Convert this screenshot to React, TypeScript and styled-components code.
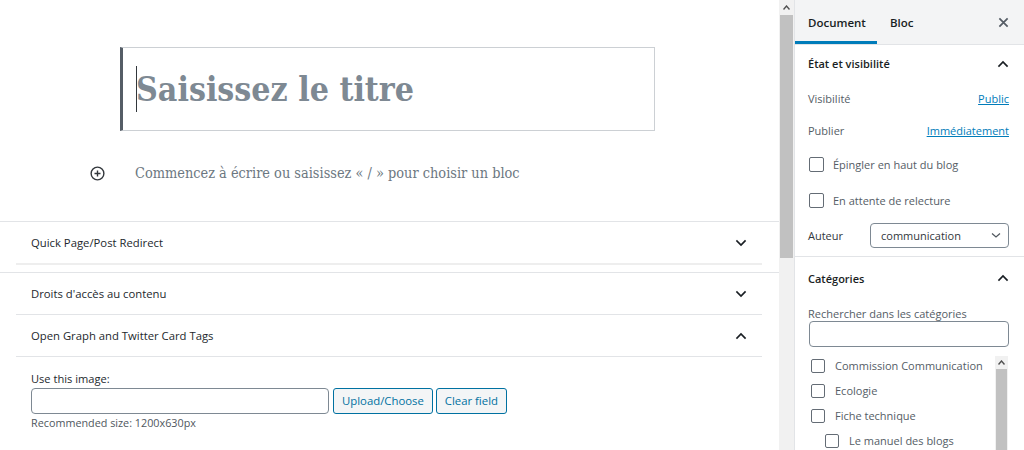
import React from "react";
import styled, { createGlobalStyle } from "styled-components";

const GlobalStyle = createGlobalStyle`
  html, body { margin: 0; padding: 0; background: #fff; }
  body { font-family: "Open Sans", "Noto Sans", sans-serif; color: #191e23; }
  * { box-sizing: border-box; }
`;

const Layout = styled.div`
  display: grid;
  grid-template-columns: 779px 15px 230px;
  height: 450px;
  overflow: hidden;
  background: #fff;
`;

/* ---------- Editor ---------- */
const Editor = styled.main`
  display: flex;
  flex-direction: column;
  min-width: 0;
`;

const TitleWrap = styled.div`
  padding: 47px 0 0 120px;
`;

const TitleBox = styled.div`
  width: 535px;
  height: 84px;
  border: 1px solid #ccd0d4;
  border-left: 3px solid #555d66;
  display: flex;
  align-items: center;
  padding-left: 13px;
`;

const Caret = styled.span`
  width: 1px;
  height: 46px;
  background: #32373c;
  margin-right: -1px;
  flex: none;
`;

const TitleText = styled.span`
  font-family: "DejaVu Serif Condensed", "DejaVu Serif", serif;
  font-stretch: semi-condensed;
  font-weight: 700;
  font-size: 33.6px;
  color: #7e8993;
  white-space: nowrap;
`;

const ParagraphRow = styled.div`
  margin-top: 29px;
  height: 26px;
  display: flex;
  align-items: center;
  padding-left: 90px;
  gap: 30px;
`;

const Placeholder = styled.span`
  font-family: "DejaVu Serif Condensed", "DejaVu Serif", serif;
  font-stretch: semi-condensed;
  font-size: 14.4px;
  color: #6c7781;
  white-space: nowrap;
`;

const InserterIcon = () => (
  <svg width="15" height="15" viewBox="0 0 16 16" fill="none">
    <circle cx="8" cy="8" r="6.8" stroke="#32373c" strokeWidth="1.5" />
    <path d="M8 4.8v6.4M4.8 8h6.4" stroke="#32373c" strokeWidth="1.5" />
  </svg>
);

const MetaArea = styled.section`
  margin-top: 35px;
  display: flex;
  flex-direction: column;
`;

const Region = styled.div<{ $pb?: number }>`
  border-top: 1px solid #e2e4e7;
  padding: 0 17px ${(p) => p.$pb ?? 0}px 16px;
`;

const BoxHeader = styled.div<{ $thick?: boolean }>`
  height: ${(p) => (p.$thick ? 43 : 42)}px;
  display: flex;
  align-items: center;
  justify-content: space-between;
  padding: 0 15px 0 15px;
  border-bottom: ${(p) => (p.$thick ? "2px solid #eeeeee" : "1px solid #e2e4e7")};
  font-size: 11.3px;
  color: #23282d;
`;

const BoxBody = styled.div`
  padding: 14px 15px 0;
  font-size: 11.1px;
  color: #23282d;
`;

const FieldLabel = styled.div`
  line-height: 16px;
`;

const FieldRow = styled.div`
  margin-top: 1px;
  display: flex;
  gap: 3px;
  align-items: center;
`;

const TextInput = styled.div<{ $w: number; $h: number; $mr?: number }>`
  width: ${(p) => p.$w}px;
  height: ${(p) => p.$h}px;
  margin-right: ${(p) => p.$mr ?? 0}px;
  border: 1px solid #7e8993;
  border-radius: 4px;
  background: #fff;
  flex: none;
`;

const SecondaryButton = styled.button`
  height: 26px;
  padding: 0 8px;
  border: 1px solid #0071a1;
  border-radius: 3px;
  background: #f3f5f6;
  color: #0071a1;
  font-family: "Open Sans", sans-serif;
  font-size: 11.35px;
  line-height: 24px;
`;

const Hint = styled.div`
  margin-top: 1px;
  line-height: 16px;
  color: #50575e;
  font-size: 10.8px;
`;

const Chevron = ({ up }: { up?: boolean }) => (
  <svg width="12" height="12" viewBox="0 0 24 24" fill="none">
    <path
      d={up ? "M4 16l8-8 8 8" : "M4 8l8 8 8-8"}
      stroke="#191e23"
      strokeWidth="3.4"
      strokeLinecap="square"
    />
  </svg>
);

/* ---------- Scrollbars ---------- */
const ScrollTrack = styled.div<{ $w: number }>`
  width: ${(p) => p.$w}px;
  background: #f1f1f1;
  display: flex;
  flex-direction: column;
  align-items: stretch;
`;

const ScrollArrow = styled.div<{ $h: number }>`
  height: ${(p) => p.$h}px;
  display: flex;
  align-items: center;
  justify-content: center;
  flex: none;
`;

const ScrollThumb = styled.div<{ $h?: number }>`
  background: #c1c1c1;
  margin: 0 1px;
  ${(p) => (p.$h ? `height: ${p.$h}px; flex: none;` : "flex: 1;")}
`;

const UpArrow = () => (
  <svg width="7" height="5" viewBox="0 0 7 5">
    <path d="M0.5 4.5L3.5 1L6.5 4.5" fill="none" stroke="#505050" strokeWidth="1.4" />
  </svg>
);

/* ---------- Sidebar ---------- */
const Sidebar = styled.aside`
  border-left: 1px solid #e2e4e7;
  display: flex;
  flex-direction: column;
  font-size: 11px;
`;

const SidebarHeader = styled.div`
  height: 45px;
  background: #f3f4f5;
  border-bottom: 1px solid #e2e4e7;
  display: flex;
  align-items: stretch;
`;

const Tab = styled.div<{ $active?: boolean }>`
  height: 44px;
  padding: 0 ${(p) => (p.$active ? 11 : 13)}px 0 13px;
  display: flex;
  align-items: center;
  font-weight: 600;
  font-size: 11.5px;
  color: #191e23;
  box-shadow: ${(p) => (p.$active ? "inset 0 -3px 0 #007cba" : "none")};
`;

const CloseButton = styled.div`
  margin-left: auto;
  width: 42px;
  display: flex;
  align-items: center;
  justify-content: center;
`;

const Panel = styled.div<{ $pb?: number; $bt?: boolean }>`
  padding: 0 15px ${(p) => p.$pb ?? 0}px 13px;
  border-top: ${(p) => (p.$bt ? "1px solid #e2e4e7" : "none")};
`;

const PanelHeader = styled.div<{ $h: number }>`
  height: ${(p) => p.$h}px;
  display: flex;
  align-items: center;
  justify-content: space-between;
  font-weight: 600;
  color: #191e23;
`;

const Row = styled.div<{ $h: number }>`
  height: ${(p) => p.$h}px;
  display: flex;
  align-items: center;
  justify-content: space-between;
`;

const MutedLabel = styled.span`
  color: #555d66;
`;

const Link = styled.a`
  color: #007cba;
  text-decoration: underline;
`;

const CheckRow = styled.label<{ $h: number; $indent?: number }>`
  height: ${(p) => p.$h}px;
  display: flex;
  align-items: center;
  gap: ${(p) => (p.$indent !== undefined ? 10 : 9)}px;
  padding-left: ${(p) => (p.$indent !== undefined ? 2 + p.$indent : 1)}px;
  color: #555d66;
`;

const Box = styled.span<{ $s: number }>`
  width: ${(p) => p.$s}px;
  height: ${(p) => p.$s}px;
  border: 1.5px solid #646c75;
  border-radius: 2px;
  background: #fff;
  flex: none;
`;

const AuthorLabel = styled.span`
  color: #32373c;
`;

const Select = styled.div`
  width: 139px;
  height: 25px;
  border: 1px solid #7e8993;
  border-radius: 4px;
  display: flex;
  align-items: center;
  justify-content: space-between;
  padding: 0 6px 0 10px;
  color: #32373c;
`;

const SearchLabel = styled.div`
  margin-top: 7px;
  line-height: 16px;
  color: #555d66;
`;

const SearchWrap = styled.div`
  margin: -1px 0 0 1px;
`;

const CatList = styled.div`
  margin: 6px 0 0 1px;
  width: 199px;
  display: flex;
  height: 100px;
`;

const CatItems = styled.div`
  flex: 1;
  display: flex;
  flex-direction: column;
`;

const CatScroll = styled(ScrollTrack)`
  margin-top: 3px;
`;

const SmallChevron = () => (
  <svg width="12" height="12" viewBox="0 0 24 24" fill="none">
    <path d="M4 9l8 7 8-7" stroke="#50575e" strokeWidth="2.4" />
  </svg>
);

const CloseIcon = () => (
  <svg width="11" height="11" viewBox="0 0 12 12">
    <path d="M1.5 1.5l9 9M10.5 1.5l-9 9" stroke="#555d66" strokeWidth="1.9" />
  </svg>
);

const categories: { name: string; indent?: number }[] = [
  { name: "Commission Communication" },
  { name: "Ecologie" },
  { name: "Fiche technique" },
  { name: "Le manuel des blogs", indent: 14 },
];

export default function App() {
  return (
    <>
      <GlobalStyle />
      <Layout>
        <Editor>
          <TitleWrap>
            <TitleBox>
              <Caret />
              <TitleText>Saisissez le titre</TitleText>
            </TitleBox>
          </TitleWrap>
          <ParagraphRow>
            <InserterIcon />
            <Placeholder>Commencez à écrire ou saisissez « / » pour choisir un bloc</Placeholder>
          </ParagraphRow>
          <MetaArea>
            <Region $pb={7}>
              <BoxHeader $thick>
                <span>Quick Page/Post Redirect</span>
                <Chevron />
              </BoxHeader>
            </Region>
            <Region>
              <BoxHeader>
                <span>Droits d'accès au contenu</span>
                <Chevron />
              </BoxHeader>
              <BoxHeader>
                <span>Open Graph and Twitter Card Tags</span>
                <Chevron up />
              </BoxHeader>
              <BoxBody>
                <FieldLabel>Use this image:</FieldLabel>
                <FieldRow>
                  <TextInput $w={298} $h={26} $mr={1} />
                  <SecondaryButton>Upload/Choose</SecondaryButton>
                  <SecondaryButton>Clear field</SecondaryButton>
                </FieldRow>
                <Hint>Recommended size: 1200x630px</Hint>
              </BoxBody>
            </Region>
          </MetaArea>
        </Editor>

        <ScrollTrack $w={15}>
          <ScrollArrow $h={15}>
            <UpArrow />
          </ScrollArrow>
          <ScrollThumb $h={243} />
        </ScrollTrack>

        <Sidebar>
          <SidebarHeader>
            <Tab $active>Document</Tab>
            <Tab>Bloc</Tab>
            <CloseButton>
              <CloseIcon />
            </CloseButton>
          </SidebarHeader>

          <Panel $pb={4}>
            <PanelHeader $h={37}>
              <span>État et visibilité</span>
              <Chevron up />
            </PanelHeader>
            <Row $h={32}>
              <MutedLabel>Visibilité</MutedLabel>
              <Link>Public</Link>
            </Row>
            <Row $h={32}>
              <MutedLabel>Publier</MutedLabel>
              <Link>Immédiatement</Link>
            </Row>
            <CheckRow $h={36}>
              <Box $s={15} />
              Épingler en haut du blog
            </CheckRow>
            <CheckRow $h={36}>
              <Box $s={15} />
              En attente de relecture
            </CheckRow>
            <Row $h={34}>
              <AuthorLabel>Auteur</AuthorLabel>
              <Select>
                <span>communication</span>
                <SmallChevron />
              </Select>
            </Row>
          </Panel>

          <Panel $bt>
            <PanelHeader $h={42}>
              <span>Catégories</span>
              <Chevron up />
            </PanelHeader>
            <SearchLabel>Rechercher dans les catégories</SearchLabel>
            <SearchWrap>
              <TextInput $w={200} $h={26} />
            </SearchWrap>
            <CatList>
              <CatItems>
                {categories.map((c) => (
                  <CheckRow key={c.name} $h={25} $indent={c.indent ?? 0}>
                    <Box $s={14} />
                    {c.name}
                  </CheckRow>
                ))}
              </CatItems>
              <CatScroll $w={13}>
                <ScrollArrow $h={13}>
                  <UpArrow />
                </ScrollArrow>
                <ScrollThumb />
              </CatScroll>
            </CatList>
          </Panel>
        </Sidebar>
      </Layout>
    </>
  );
}
